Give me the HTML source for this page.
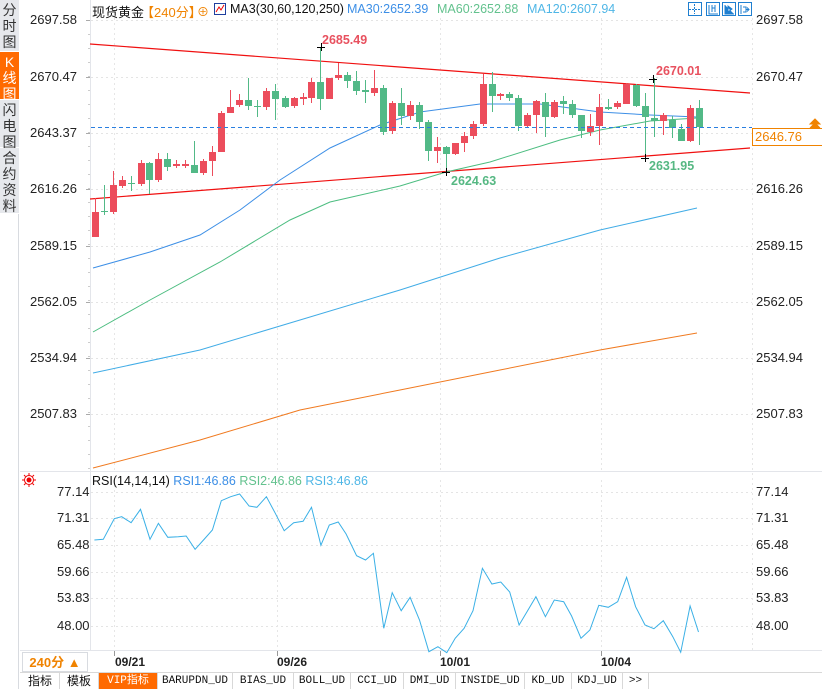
<!DOCTYPE html>
<html><head><meta charset="utf-8">
<style>
html,body{margin:0;width:822px;height:689px;overflow:hidden}
body{background:#fff;font-family:"Liberation Sans","Noto Sans CJK SC",sans-serif;position:relative}
.side{position:absolute;left:0;top:0;width:19px;height:689px;background:#fff;border-right:1px solid #d8dbe0;box-sizing:border-box}
.tab{position:absolute;left:0;width:19px;background:#e6e8ec;color:#333;font-size:14px;line-height:16px;text-align:center;border-bottom:1px solid #fff;box-sizing:border-box;padding-top:2px}
.ax{position:absolute;font-size:13px;color:#222}
.hd{position:absolute;top:2px;font-size:12.5px;white-space:nowrap}
.bt{position:absolute;top:673px;height:16px;font-family:"Liberation Mono","Noto Sans CJK SC",monospace;font-size:11px;line-height:16px;text-align:center;border-right:1px solid #d8d8d8;color:#111;background:#fff}
</style></head><body>
<div class="side"></div>
<div class="tab" style="top:0;height:52px">分<br>时<br>图</div>
<div class="tab" style="top:52px;height:48px;background:#ff6a00;color:#fff">K<br>线<br>图</div>
<div class="tab" style="top:100px;height:48px">闪<br>电<br>图</div>
<div class="tab" style="top:148px;height:66px">合<br>约<br>资<br>料</div>

<svg id="s" width="822" height="689" style="position:absolute;left:0;top:0"></svg>
<div id="lbl"></div>

<div class="hd" style="left:92px;color:#111;font-size:13px">现货黄金</div>
<div class="hd" style="left:141px;color:#f08300;font-size:13px">【240分】</div>
<div class="hd" style="left:197px;color:#f08300;font-size:12px;top:3px">⊕</div>
<div class="hd" style="left:230px;color:#111">MA3(30,60,120,250)</div>
<div class="hd" style="left:347px;color:#3d8fe6">MA30:2652.39</div>
<div class="hd" style="left:437px;color:#63c28e">MA60:2652.88</div>
<div class="hd" style="left:527px;color:#4fb6e6">MA120:2607.94</div>

<div class="hd" style="left:92px;top:474px;color:#111">RSI(14,14,14) <span style="color:#3d8fe6">RSI1:46.86</span> <span style="color:#63c28e">RSI2:46.86</span> <span style="color:#4fb6e6">RSI3:46.86</span></div>

<div style="position:absolute;left:22px;top:652px;width:66px;height:20px;border:1px solid #d8dbe0;color:#f08300;font-weight:bold;font-size:13px;line-height:20px;text-align:center;box-sizing:border-box">240分 ▲</div>
<div class="ax" style="left:115px;top:655px;font-weight:bold;font-size:12px">09/21</div>
<div class="ax" style="left:277px;top:655px;font-weight:bold;font-size:12px">09/26</div>
<div class="ax" style="left:440px;top:655px;font-weight:bold;font-size:12px">10/01</div>
<div class="ax" style="left:601px;top:655px;font-weight:bold;font-size:12px">10/04</div>

<div style="position:absolute;left:20px;top:672px;width:802px;height:1px;background:#d8d8d8"></div>
<div class="bt" style="left:21px;width:38px;font-family:'Noto Sans CJK SC',sans-serif;font-size:12px">指标</div>
<div class="bt" style="left:60px;width:38px;font-family:'Noto Sans CJK SC',sans-serif;font-size:12px">模板</div>
<div class="bt" style="left:99px;width:58px;background:#ff6a00;color:#fff">VIP指标</div>
<div class="bt" style="left:158px;width:74px">BARUPDN_UD</div>
<div class="bt" style="left:233px;width:60px">BIAS_UD</div>
<div class="bt" style="left:294px;width:56px">BOLL_UD</div>
<div class="bt" style="left:351px;width:52px">CCI_UD</div>
<div class="bt" style="left:404px;width:51px">DMI_UD</div>
<div class="bt" style="left:456px;width:68px">INSIDE_UD</div>
<div class="bt" style="left:525px;width:46px">KD_UD</div>
<div class="bt" style="left:572px;width:50px">KDJ_UD</div>
<div class="bt" style="left:623px;width:25px">&gt;&gt;</div>

<div class="ax" style="left:322px;top:33px;color:#e8515f;font-weight:bold;font-size:12.5px">2685.49</div>
<div class="ax" style="left:656px;top:64px;color:#e8515f;font-weight:bold;font-size:12.5px">2670.01</div>
<div class="ax" style="left:451px;top:174px;color:#56b883;font-weight:bold;font-size:12.5px">2624.63</div>
<div class="ax" style="left:649px;top:159px;color:#56b883;font-weight:bold;font-size:12.5px">2631.95</div>
<div style="position:absolute;left:752px;top:128px;width:68px;height:16px;border:1px solid #f08300;background:#fff;color:#f08300;font-size:13px;line-height:16px;padding-left:2px">2646.76</div>

<script>
var s=document.getElementById('s'),h='';
function L(x1,y1,x2,y2,c,w,d){h+='<line x1="'+x1+'" y1="'+y1+'" x2="'+x2+'" y2="'+y2+'" stroke="'+c+'" stroke-width="'+(w||1)+'"'+(d?' stroke-dasharray="'+d+'"':'')+'/>';}
function P(pts,c){h+='<polyline fill="none" stroke="'+c+'" stroke-width="1" points="'+pts.map(function(p){return p.join(',')}).join(' ')+'"/>';}
L(20,471.5,822,471.5,'#e3e5ea');
L(90.5,0,90.5,650,'#e3e5ea');L(752.5,18,752.5,650,'#e6e6e6',1,'2,3');
var lb='';
var py=[20,77,133,189,246,302,358,414],pv=['2697.58','2670.47','2643.37','2616.26','2589.15','2562.05','2534.94','2507.83'];
py.forEach(function(y,i){L(91,y+0.5,752,y+0.5,'#e4e4e4',1,'2,3');L(86,y+0.5,90,y+0.5,'#aaa');
lb+='<div class="ax" style="left:30px;top:'+(y-8)+'px">'+pv[i]+'</div>'+(i==2?'':'<div class="ax" style="left:756px;top:'+(y-8)+'px">'+pv[i]+'</div>');});
for(var y=34;y<470;y+=14){L(88,y+.5,90,y+.5,'#ccc');}
var ry=[492,518,545,572,598,626],rv=['77.14','71.31','65.48','59.66','53.83','48.00'];
ry.forEach(function(y,i){L(91,y+0.5,752,y+0.5,'#e4e4e4',1,'2,3');
lb+='<div class="ax" style="left:57px;top:'+(y-8)+'px">'+rv[i]+'</div><div class="ax" style="left:756px;top:'+(y-8)+'px">'+rv[i]+'</div>';});
[114,277,440,601].forEach(function(x){L(x+.5,18,x+.5,470,'#e6e6e6',1,'2,3');L(x+.5,480,x+.5,650,'#e6e6e6',1,'2,3');L(x+.5,650,x+.5,656,'#999');});
L(20,650.5,822,650.5,'#e3e5ea');
document.getElementById('lbl').innerHTML=lb;
L(90,44,750,93,'#f01010',1.2);L(90,199,750,148,'#f01010',1.2);
P([[93,268],[150,252],[200,235],[240,210],[280,180],[330,148],[380,125],[420,112],[480,104],[540,104],[600,112],[650,115],[697,117]],'#3d8fe6');
P([[93,332],[150,300],[220,262],[290,220],[330,202],[400,186],[446,172],[490,162],[560,140],[600,130],[650,121],[697,118]],'#4cbd80');
P([[93,373],[200,350],[300,320],[400,290],[500,258],[600,230],[697,208]],'#41ace6');
P([[93,468],[200,440],[300,410],[400,390],[500,370],[600,350],[697,333]],'#f07a20');
var C=[[95,212,237,198,237,1],[104,211,212,185,215,0],[113,185,212,171,214,1],[122,180,186,176,188,1],[131,183,184,176,191,0],[141,163,184,160,186,1],[149,163,180,162,194,0],[158,159,180,153,182,1],[167,159,167,153,171,0],[176,164,166,160,168,1],[185,164,166,160,168,1],[194,165,173,141,173,0],[203,161,173,159,175,1],[212,152,161,146,176,1],[221,113,152,111,152,1],[230,107,113,90,113,1],[239,100,105,94,107,1],[248,100,106,78,110,0],[257,106,107,100,117,0],[266,91,107,88,110,1],[275,91,99,84,120,0],[285,98,107,96,108,0],[294,98,106,97,108,1],[303,97,99,93,105,1],[311,82,98,78,103,1],[320,82,99,47,110,0],[329,78,99,78,99,1],[338,75,78,63,80,1],[347,75,81,72,88,0],[356,81,91,71,95,0],[365,90,92,80,103,0],[374,88,93,70,96,1],[383,88,132,85,135,0],[392,103,131,101,134,1],[401,103,116,88,125,0],[410,105,116,101,120,1],[419,105,122,102,129,0],[428,122,151,120,161,0],[437,147,151,137,163,1],[446,147,154,146,172,0],[455,143,154,143,155,1],[464,136,143,132,152,1],[473,124,136,121,139,1],[483,84,124,74,126,1],[492,84,96,72,112,0],[500,94,96,93,100,1],[509,94,98,92,101,0],[518,98,126,95,131,0],[527,115,126,113,127,1],[536,101,115,100,133,1],[545,102,117,93,137,0],[554,102,117,100,118,1],[563,101,104,96,114,0],[572,104,115,100,118,0],[581,115,131,115,138,0],[590,126,132,114,136,1],[599,107,126,94,145,1],[608,107,109,99,110,0],[617,103,107,101,109,1],[626,84,104,83,104,1],[636,85,106,84,107,0],[645,106,117,93,158,0],[654,118,121,78,137,0],[663,115,121,113,135,1],[672,120,128,116,138,0],[681,129,141,124,141,0],[690,108,141,105,142,1],[699,108,127,100,145,0]];
C.forEach(function(c){var col=c[5]?'#ec4d5c':'#52b987';L(c[0]+.5,c[3],c[0]+.5,c[4],col);
h+='<rect x="'+(c[0]-3)+'" y="'+c[1]+'" width="7" height="'+Math.max(1,c[2]-c[1])+'" fill="'+col+'"/>';});
L(91,127.5,752,127.5,'#2a7fe0',1,'4,3');
h+='<path d="M810 124 L815 119 L820 124 Z M810 128 L815 123 L820 128" fill="#f08300" stroke="#f08300"/>';
[[321,47],[653,79],[446,172],[645,158]].forEach(function(p){L(p[0]-4,p[1]+.5,p[0]+4,p[1]+.5,'#000');L(p[0]+.5,p[1]-4,p[0]+.5,p[1]+4,'#000');});
var R=[[180,240],[197,238],[218,176],[232,170],[250,188],[268,148],[286,238],[302,190],[320,232],[340,230],[355,228],[372,268],[388,240],[405,210],[422,122],[440,110],[457,102],[475,138],[490,142],[508,110],[525,160],[542,212],[560,188],[578,184],[594,142],[612,256],[628,195],[645,186],[660,222],[680,287],[697,300],[712,280],[732,505],[748,398],[765,452],[782,412],[800,480],[818,575],[835,560],[852,578],[868,535],[885,505],[902,452],[920,325],[938,372],[955,366],[972,396],[990,495],[1005,455],[1022,410],[1040,470],[1057,420],[1075,425],[1090,468],[1108,535],[1125,510],[1142,436],[1160,442],[1178,425],[1195,352],[1212,440],[1230,495],[1247,506],[1265,482],[1283,530],[1298,577],[1316,438],[1332,516]].map(function(p){return [(p[0]/1.907).toFixed(1),(p[1]/3+460).toFixed(1)]});
P(R,'#3ab0e6');
h+='<circle cx="29" cy="480" r="2.5" fill="#e00"/><circle cx="29" cy="480" r="4.5" fill="none" stroke="#e00"/><path d="M29 473v2M29 485v2M22 480h2M34 480h2M24 475l1.5 1.5M32.5 483.5l1.5 1.5M34 475l-1.5 1.5M24 485l1.5-1.5" stroke="#e00"/>';
[688,706,722,738].forEach(function(x){h+='<rect x="'+x+'.5" y="2.5" width="13" height="13" fill="#fff" stroke="#1f7fd0"/>';});
h+='<path d="M694.5 4v10M689 9.5h11" stroke="#1f7fd0" stroke-dasharray="2,1"/><path d="M709 5v9h9M712 5v7M715 5v7M712 8h3" stroke="#1f7fd0" fill="none"/><path d="M725 5v9h9M728 6l4 3-4 3z" stroke="#1f7fd0" fill="#1f7fd0"/><path d="M741 5v9M743 7h3v5h-3M746 9.5h3M747 7.5l2 2-2 2" stroke="#1f7fd0" fill="none"/>';
h+='<rect x="214.5" y="3.5" width="11" height="11" fill="#fff" stroke="#1f3f9f"/><path d="M216 12l3-5 2 3 3-5" stroke="#e00" fill="none"/>';
s.innerHTML=h;
</script>
</body></html>
